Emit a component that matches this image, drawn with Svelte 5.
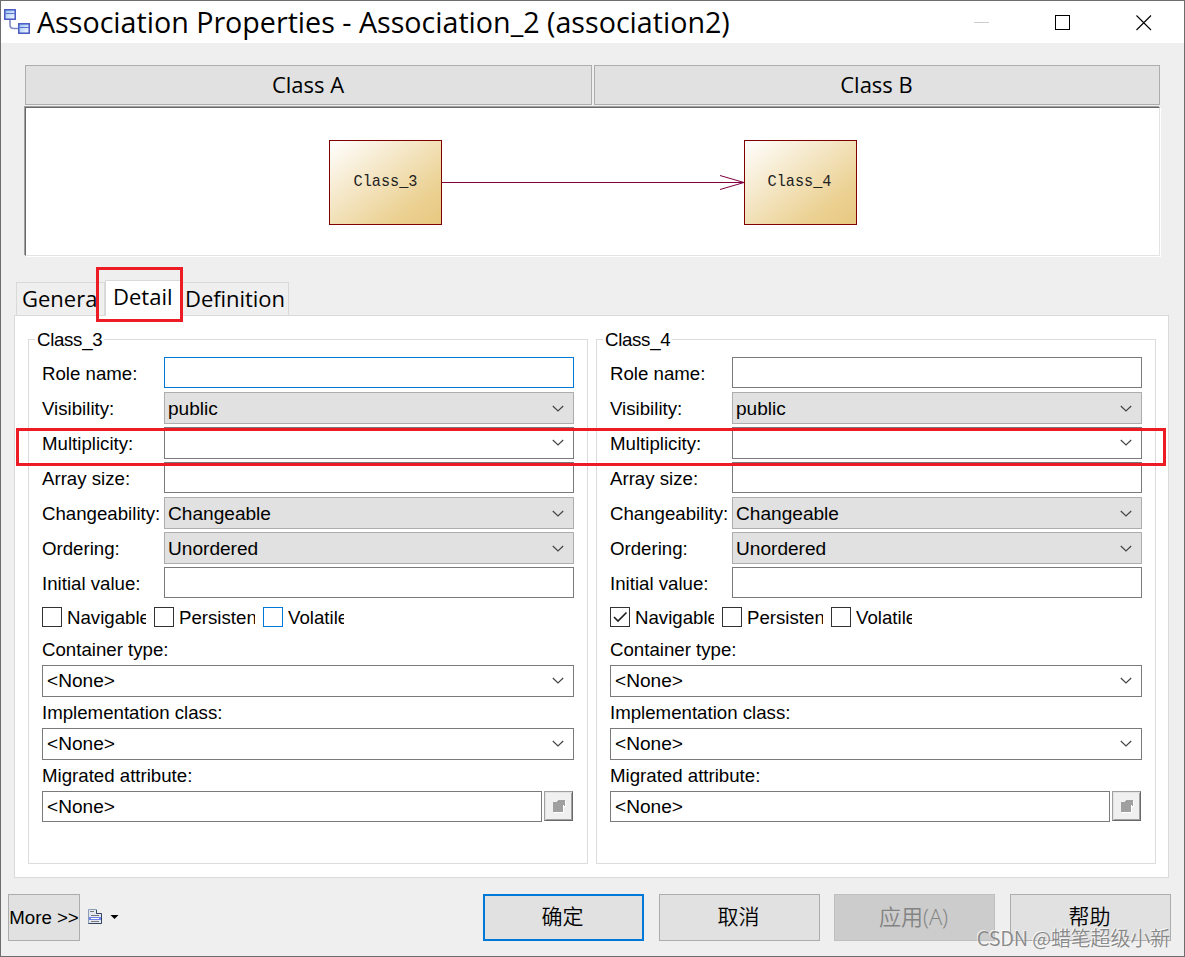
<script lang="ts">
  type Field = { label: string; kind: 'text' | 'select' | 'combo'; value?: string };

  const fields: Field[] = [
    { label: 'Role name:', kind: 'text' },
    { label: 'Visibility:', kind: 'select', value: 'public' },
    { label: 'Multiplicity:', kind: 'combo' },
    { label: 'Array size:', kind: 'text' },
    { label: 'Changeability:', kind: 'select', value: 'Changeable' },
    { label: 'Ordering:', kind: 'select', value: 'Unordered' },
    { label: 'Initial value:', kind: 'text' }
  ];

  const roles = [
    { name: 'Class_3', navigable: false, active: true },
    { name: 'Class_4', navigable: true, active: false }
  ];
</script>

{#snippet chevron()}
  <svg class="chevron" width="12" height="8" viewBox="0 0 12 8">
    <path d="M0.8 1 L6 6 L11.2 1" fill="none" stroke="#444" stroke-width="1.2" />
  </svg>
{/snippet}

<div class="dialog">
  <header class="titlebar">
    <svg class="app-icon" width="28" height="28" viewBox="0 0 28 28">
      <defs>
        <linearGradient id="box" x1="0" y1="0" x2="1" y2="1">
          <stop offset="0" stop-color="#8fc0f2" />
          <stop offset="1" stop-color="#fff" />
        </linearGradient>
      </defs>
      <path d="M7 12 V17 Q7 20.5 11 20.5 H15" fill="none" stroke="#7f88c4" stroke-width="1.6" />
      <g fill="url(#box)" stroke="#4656c4" stroke-width="1.5">
        <rect x="1.8" y="1.8" width="10.4" height="9.4" />
        <rect x="15.8" y="15.8" width="10.4" height="9.4" />
      </g>
      <path d="M2.5 5.5 H11.5 M16.5 19.5 H25.5" stroke="#5f6fd2" stroke-width="1" />
    </svg>
    <h1>Association Properties - Association_2 (association2)</h1>
    <svg class="window-buttons" width="178" height="16" viewBox="0 0 178 16">
      <path d="M0 7.5 H15" stroke="#ccc" />
      <rect x="81.5" y="0.5" width="14" height="14" fill="none" stroke="#000" />
      <path d="M162.5 0.5 L177 15 M177 0.5 L162.5 15" stroke="#000" stroke-width="1.1" />
    </svg>
  </header>

  <section class="classes">
    <div class="class-buttons">
      <button>Class A</button>
      <button>Class B</button>
    </div>
    <div class="diagram">
      <svg width="1133" height="147" viewBox="26 108 1133 147">
        <defs>
          <linearGradient id="sand" x1="0" y1="0" x2="1" y2="1">
            <stop offset="0" stop-color="#fff" />
            <stop offset="0.75" stop-color="#ebd193" />
            <stop offset="1" stop-color="#e8c880" />
          </linearGradient>
        </defs>
        <path d="M442 182.5 H744" stroke="#800040" />
        <path d="M720 175.5 L744 182.5 L720 189.5" fill="none" stroke="#800040" />
        <g fill="url(#sand)" stroke="#800000">
          <rect x="329.5" y="140.5" width="112" height="84" />
          <rect x="744.5" y="140.5" width="112" height="84" />
        </g>
        <text x="353.5" y="186" textLength="64" lengthAdjust="spacingAndGlyphs">Class_3</text>
        <text x="767.5" y="186" textLength="64" lengthAdjust="spacingAndGlyphs">Class_4</text>
      </svg>
    </div>
  </section>

  <nav class="tabs">
    <span class="tab general"><span>General</span></span>
    <span class="tab selected">Detail</span>
    <span class="tab definition">Definition</span>
    <div class="mark mark-tab"></div>
  </nav>

  <main class="page">
    {#each roles as role}
      <fieldset class:active={role.active}>
        <legend>{role.name}</legend>
        {#each fields as field}
          <div class="row">
            <span class="label">{field.label}</span>
            <div class="control {field.kind}">
              {field.value ?? ''}
              {#if field.kind !== 'text'}{@render chevron()}{/if}
            </div>
          </div>
        {/each}
        <div class="checks">
          <span class="check navigable">
            <i>
              {#if role.navigable}
                <svg width="18" height="18" viewBox="0 0 18 18">
                  <path d="M3 9 L7 13 L15.5 4.5" fill="none" stroke="#222" stroke-width="1.7" />
                </svg>
              {/if}
            </i>
            <b>Navigable</b>
          </span>
          <span class="check persistent"><i></i><b>Persisten</b></span>
          <span class="check volatile"><i></i><b>Volatile</b></span>
        </div>
        <span class="caption">Container type:</span>
        <div class="control combo wide">&lt;None&gt;{@render chevron()}</div>
        <span class="caption">Implementation class:</span>
        <div class="control combo wide">&lt;None&gt;{@render chevron()}</div>
        <span class="caption">Migrated attribute:</span>
        <div class="migrated">
          <div class="control text wide">&lt;None&gt;</div>
          <div class="browse">
            <svg width="14" height="14" viewBox="0 0 14 14">
              <path d="M2 4 H5 L7 2 H14 V8 H12 V14 H2 Z" fill="#fff" />
              <path d="M1 3 H5 V2 H6 V1 H13 V7 H12 V6 H11 V13 H1 Z" fill="#a0a0a0" />
            </svg>
          </div>
        </div>
      </fieldset>
    {/each}
    <div class="mark mark-row"></div>
  </main>

  <footer>
    <button class="more">More &gt;&gt;</button>
    <svg class="menu-icon" width="32" height="16" viewBox="0 0 32 16">
      <path d="M0.5 0.5 H8.5 V4.5 H13.5 V14.5 H0.5 Z" fill="#e4e8f0" stroke="#8a9bb5" />
      <path d="M13.5 4.5 V14.5 H0.5 M8.5 1 V4.5 H13.5" fill="none" stroke="#34445e" />
      <path d="M2 2.5 H6 M3 6.5 H11 M3 12.5 H11" stroke="#777" />
      <rect x="1" y="8" width="12" height="3" fill="#6f86ee" />
      <path d="M3 9.5 H11" stroke="#fff" />
      <path d="M22.5 6 H30.5 L26.5 10 Z" fill="#000" />
    </svg>
    <div class="actions">
      <button class="default">确定</button>
      <button>取消</button>
      <button disabled>应用(A)</button>
      <button>帮助</button>
    </div>
  </footer>
  <span class="watermark">CSDN @蜡笔超级小新</span>
</div>

<style>
  .dialog {
    position: relative;
    display: flex;
    flex-direction: column;
    box-sizing: border-box;
    width: 1185px;
    height: 957px;
    overflow: hidden;
    border: 1px solid #6e6c6e;
    background: #efefef;
    color: #000;
    font: 18.67px 'Liberation Sans', Arial, sans-serif;
    white-space: nowrap;
  }

  .titlebar {
    display: flex;
    align-items: center;
    height: 42px;
    padding: 0 32px 0 2px;
    background: #fff;
  }

  .app-icon {
    flex: none;
    margin: 0 6px 1px 0;
  }

  h1 {
    flex: 1;
    margin: 0 0 2px;
    font: 400 28.65px/39px 'Open Sans', 'Segoe UI', sans-serif;
  }

  .window-buttons {
    flex: none;
    margin-top: 2px;
  }

  button {
    box-sizing: border-box;
    padding: 0;
    border: 1px solid #adadad;
    background: #e1e1e1;
    color: #000;
    font: inherit;
  }

  .classes {
    padding: 22px 23px 0;
  }

  .class-buttons {
    display: grid;
    grid-template-columns: 567px 566px;
    gap: 2px;
    margin-left: 1px;
  }

  .class-buttons button {
    height: 40px;
    padding: 0 1px 2px 0;
    font: 22px 'Open Sans', 'Segoe UI', sans-serif;
  }

  .diagram {
    width: 1133px;
    height: 147px;
    margin: 2px 0 0 1px;
    border: 1px solid #e3e3e3;
    border-top-color: #696969;
    border-left-color: #696969;
    background: #fff;
    box-shadow: -1px -1px 0 #a0a0a0, 1px 1px 0 #fff;
  }

  .diagram svg {
    display: block;
  }

  .diagram text {
    font: 17px 'Liberation Mono', monospace;
    fill: #222;
  }

  .tabs {
    position: relative;
    z-index: 1;
    display: flex;
    align-items: flex-end;
    height: 36px;
    margin: 23px 0 0 15px;
    font: 22px/31px 'Open Sans', 'Segoe UI', sans-serif;
  }

  .tab {
    box-sizing: border-box;
    height: 33px;
    border: 1px solid #d9d9d9;
    border-bottom: 0;
  }

  .general {
    width: 89px;
    padding-left: 5px;
  }

  /* the label is cut before the tab's own right edge */
  .general span {
    display: block;
    width: 74px;
    overflow: hidden;
  }

  .selected {
    width: 76px;
    height: 36px;
    margin-bottom: -1px;
    padding-left: 7px;
    background: #fff;
  }

  .definition {
    width: 108px;
    padding-left: 4px;
    border-left: 0;
    letter-spacing: -0.05px;
  }

  .page {
    position: relative;
    display: flex;
    gap: 8px;
    box-sizing: border-box;
    width: 1155px;
    height: 563px;
    margin-left: 13px;
    padding: 23px 0 0 13px;
    border: 1px solid #dadada;
    background: #fff;
  }

  fieldset {
    display: flex;
    flex-direction: column;
    position: relative;
    box-sizing: border-box;
    width: 560px;
    height: 525px;
    margin: 0;
    padding: 17px 13px 0;
    border: 1px solid #dcdcdc;
  }

  legend {
    position: absolute;
    top: -12px;
    left: 6px;
    padding: 0 2px;
    background: #fff;
    line-height: 24px;
    letter-spacing: -0.3px;
  }

  .row {
    display: flex;
    height: 35px;
  }

  .label {
    width: 122px;
    line-height: 33px;
  }

  .control {
    display: flex;
    align-items: center;
    justify-content: space-between;
    box-sizing: border-box;
    width: 410px;
    height: 32px;
    padding: 0 9px 0 3px;
    border: 1px solid #7a7a7a;
    background: #fff;
    font-size: 19.1px;
    line-height: 24px;
  }

  .text {
    height: 31px;
  }

  .select {
    padding-top: 2px;
    border-color: #adadad;
    background: #e1e1e1;
  }

  .active .row:nth-child(2) .control {
    border-color: #0078d7;
  }

  .chevron {
    margin: 0 0 1px auto;
  }

  .checks {
    display: flex;
    height: 20px;
    margin-top: 5px;
  }

  .check {
    display: flex;
    gap: 5px;
    height: 24px;
    overflow: hidden;
    line-height: 21px;
  }

  .check i {
    flex: none;
    box-sizing: border-box;
    width: 20px;
    height: 20px;
    border: 1px solid #333;
  }

  .check svg {
    display: block;
  }

  .check b {
    font-weight: 400;
  }

  .navigable {
    width: 104px;
    margin-right: 8px;
  }

  .persistent {
    width: 101px;
    margin-right: 8px;
  }

  .volatile {
    width: 81px;
  }

  .active .volatile i {
    border-color: #0078d7;
  }

  .caption {
    height: 31px;
    line-height: 31px;
  }

  .checks + .caption {
    height: 38px;
    line-height: 45px;
  }

  .wide {
    width: 532px;
    padding-left: 4px;
  }

  .migrated {
    display: flex;
    gap: 2px;
  }

  .migrated .control {
    width: 500px;
  }

  .browse {
    display: grid;
    place-items: center;
    box-sizing: border-box;
    width: 29px;
    height: 30px;
    border: 1px solid #a0a0a0;
    border-right-color: #696969;
    border-bottom-color: #696969;
    background: #f0f0f0;
    box-shadow: inset 1px 1px #e3e3e3, inset -1px -1px #a0a0a0;
  }

  .mark {
    position: absolute;
    box-sizing: border-box;
    border: 3px solid #ed1c24;
    pointer-events: none;
  }

  .mark-tab {
    top: -12px;
    left: 80px;
    width: 87px;
    height: 55px;
  }

  .mark-row {
    top: 112px;
    left: 1px;
    width: 1150px;
    height: 38px;
  }

  footer {
    display: flex;
    height: 47px;
    margin: 16px 13px 0 7px;
  }

  .more {
    width: 72px;
  }

  .menu-icon {
    margin: 15px 0 0 8px;
  }

  .actions {
    display: flex;
    gap: 15px;
    margin-left: auto;
    font: 350 21px 'Noto Sans CJK SC', sans-serif;
  }

  .actions button {
    width: 161px;
    padding: 0 2px 5px 0;
  }

  .actions button:nth-child(2) {
    margin-right: -1px;
  }

  .actions .default {
    border: 2px solid #0078d7;
  }

  .actions button:disabled {
    border-color: #bfbfbf;
    background: #ccc;
    color: #838383;
    font-family: 'Open Sans', 'Noto Sans CJK SC', sans-serif;
    font-size: 22px;
  }

  .watermark {
    position: absolute;
    right: 14px;
    bottom: 4px;
    color: rgba(125, 125, 125, 0.9);
    font: 350 20px/28px 'Noto Sans CJK SC', sans-serif;
    letter-spacing: -0.15px;
    text-shadow: -1px -1px 0 rgba(255, 255, 255, 0.7);
  }
</style>
